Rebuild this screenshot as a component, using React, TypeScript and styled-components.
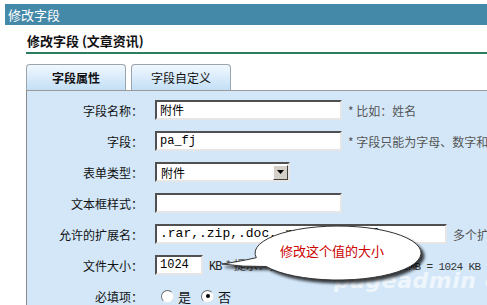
import React from "react";
import styled, { createGlobalStyle } from "styled-components";

const GlobalStyle = createGlobalStyle`
  html, body {
    margin: 0;
    padding: 0;
    background: #ffffff;
    overflow: hidden;
  }
  body {
    width: 487px;
    height: 305px;
    font-family: "Noto Sans CJK SC", "Liberation Sans", sans-serif;
    font-size: 12px;
    color: #222;
  }
`;

const Page = styled.div`
  position: relative;
  width: 487px;
  height: 305px;
  overflow: hidden;
  padding-top: 4px;
  box-sizing: border-box;
`;

const TitleBar = styled.div`
  margin-left: 5px;
  height: 21px;
  background: #4589a9;
  color: #fff;
  font-size: 13px;
  line-height: 21px;
  padding-left: 3px;
  white-space: nowrap;
`;

const Main = styled.div`
  padding-left: 26px;
`;

const SubTitle = styled.div`
  margin-top: 5px;
  height: 22px;
  line-height: 22px;
  font-size: 13px;
  font-weight: bold;
  color: #111;
  padding-left: 1px;
  border-bottom: 2px solid #2b7d5e;
  white-space: nowrap;
`;

const Tabs = styled.div`
  display: flex;
  gap: 5px;
  margin-top: 10px;
  height: 26px;
`;

const Tab = styled.div<{ $active?: boolean }>`
  width: 98px;
  height: 25px;
  border: 1px solid #9aa4ad;
  border-bottom: none;
  border-radius: 4px 4px 0 0;
  background: linear-gradient(#f1f8fe, #c3dff6);
  text-align: center;
  line-height: 25px;
  font-size: 12px;
  font-weight: ${(p) => (p.$active ? "bold" : "normal")};
  color: #111;
`;

const Panel = styled.div`
  background: #d3e7f9;
  border-left: 1px solid #8a8a8a;
  border-top: 1px solid #9a9a9a;
  padding-top: 9px;
  height: 230px;
  display: flex;
  flex-direction: column;
  gap: 11px;
`;

const Row = styled.div`
  display: grid;
  grid-template-columns: 116px auto;
  column-gap: 12px;
  align-items: center;
  height: 20px;
  white-space: nowrap;
`;

const Label = styled.div`
  text-align: right;
  font-size: 12px;
  color: #111;
`;

const Field = styled.div`
  display: flex;
  align-items: center;
  gap: 6px;
`;

const Input = styled.div<{ $w: number; $mono?: boolean; $size?: number }>`
  width: ${(p) => p.$w}px;
  height: 20px;
  box-sizing: border-box;
  background: #fff;
  border: 2px solid;
  border-color: #505050 #e6e6e6 #e6e6e6 #505050;
  padding-left: 3px;
  line-height: 16px;
  font-family: ${(p) =>
    p.$mono ? '"Liberation Mono", monospace' : '"Noto Sans CJK SC", sans-serif'};
  font-size: ${(p) => p.$size || 12}px;
  color: #000;
  overflow: hidden;
`;

const Select = styled.div`
  width: 135px;
  height: 20px;
  box-sizing: border-box;
  background: #fff;
  border: 2px solid;
  border-color: #505050 #e6e6e6 #e6e6e6 #505050;
  display: flex;
  align-items: center;
  justify-content: space-between;
  padding-left: 4px;
  font-size: 12px;
  color: #000;
`;

const SelectButton = styled.div`
  width: 15px;
  height: 15px;
  box-sizing: border-box;
  background: #d4d0c8;
  border: 1px solid;
  border-color: #fff #404040 #404040 #fff;
  display: flex;
  align-items: center;
  justify-content: center;
`;

const Hint = styled.span`
  color: #555;
  font-size: 12px;
`;

const Unit = styled.span`
  font-family: "Liberation Mono", monospace;
  font-size: 12px;
  letter-spacing: -1px;
  color: #222;
  margin-right: 4px;
`;

const Mono = styled.span`
  font-family: "Liberation Mono", monospace;
  font-size: 11px;
  letter-spacing: -0.6px;
  color: #333;
`;

const Radios = styled.div`
  display: flex;
  align-items: center;
  gap: 2px;
  padding-left: 6px;
  font-size: 13px;
  color: #111;
`;

const Radio = styled.span<{ $on?: boolean }>`
  width: 11px;
  height: 11px;
  border-radius: 50%;
  border: 1px solid;
  border-color: #6d6d6d #e8e8e8 #e8e8e8 #6d6d6d;
  background: #fff;
  display: inline-flex;
  align-items: center;
  justify-content: center;
  margin-right: 2px;
  &::after {
    content: "";
    width: 4px;
    height: 4px;
    border-radius: 50%;
    background: ${(p) => (p.$on ? "#000" : "transparent")};
  }
`;

const RadioText = styled.span`
  margin-right: 8px;
`;

const Callout = styled.div`
  position: absolute;
  left: 215px;
  top: 221px;
  width: 230px;
  height: 70px;
`;

const CalloutText = styled.div`
  position: absolute;
  left: 65px;
  top: 20px;
  color: #cc0000;
  font-size: 13px;
  white-space: nowrap;
`;

const Watermark = styled.div`
  position: absolute;
  left: 334px;
  top: 268px;
  font-family: "DejaVu Sans", sans-serif;
  font-weight: bold;
  font-style: italic;
  font-size: 22px;
  color: rgba(255, 255, 255, 0.65);
  white-space: nowrap;
  letter-spacing: 0.5px;
`;

const App: React.FC = () => {
  return (
    <Page>
      <GlobalStyle />
      <TitleBar>修改字段</TitleBar>
      <Main>
        <SubTitle>修改字段 (文章资讯)</SubTitle>
        <Tabs>
          <Tab $active>字段属性</Tab>
          <Tab>字段自定义</Tab>
        </Tabs>
        <Panel>
          <Row>
            <Label>字段名称：</Label>
            <Field>
              <Input $w={187}>附件</Input>
              <Hint>* 比如：姓名</Hint>
            </Field>
          </Row>
          <Row>
            <Label>字段：</Label>
            <Field>
              <Input $w={187} $mono>pa_fj</Input>
              <Hint>* 字段只能为字母、数字和下划线组成</Hint>
            </Field>
          </Row>
          <Row>
            <Label>表单类型：</Label>
            <Field>
              <Select>
                附件
                <SelectButton>
                  <svg width="7" height="4" viewBox="0 0 7 4">
                    <path d="M0 0 L7 0 L3.5 4 Z" fill="#000" />
                  </svg>
                </SelectButton>
              </Select>
            </Field>
          </Row>
          <Row>
            <Label>文本框样式：</Label>
            <Field>
              <Input $w={187} />
            </Field>
          </Row>
          <Row>
            <Label>允许的扩展名：</Label>
            <Field>
              <Input $w={292} $mono $size={13}>
                .rar,.zip,.doc,.rm,.jpg,.gif
              </Input>
              <Hint>多个扩展名用逗号隔开</Hint>
            </Field>
          </Row>
          <Row>
            <Label>文件大小：</Label>
            <Field>
              <Input $w={48} $mono>1024</Input>
              <Hint>
                <Unit>KB</Unit>* 提示：允许上传文件大小上限，1<Mono>MB = 1024 KB</Mono>
              </Hint>
            </Field>
          </Row>
          <Row>
            <Label>必填项：</Label>
            <Radios>
              <Radio />
              <RadioText>是</RadioText>
              <Radio $on />
              <RadioText>否</RadioText>
            </Radios>
          </Row>
        </Panel>
      </Main>
      <Watermark>pageadmin cms</Watermark>
      <Callout>
        <svg
          width="230"
          height="70"
          viewBox="0 0 230 70"
          style={{ filter: "drop-shadow(3px 3px 1.5px rgba(0,0,0,0.75))" }}
        >
          <path
            d="M41.3 36.7 Q22 41 7 43 Q28 46 51.1 45.5 A83 27 0 1 0 41.3 36.7 Z"
            fill="#ffffff"
            stroke="#333"
            strokeWidth="1"
          />
        </svg>
        <CalloutText>修改这个值的大小</CalloutText>
      </Callout>
    </Page>
  );
};

export default App;
